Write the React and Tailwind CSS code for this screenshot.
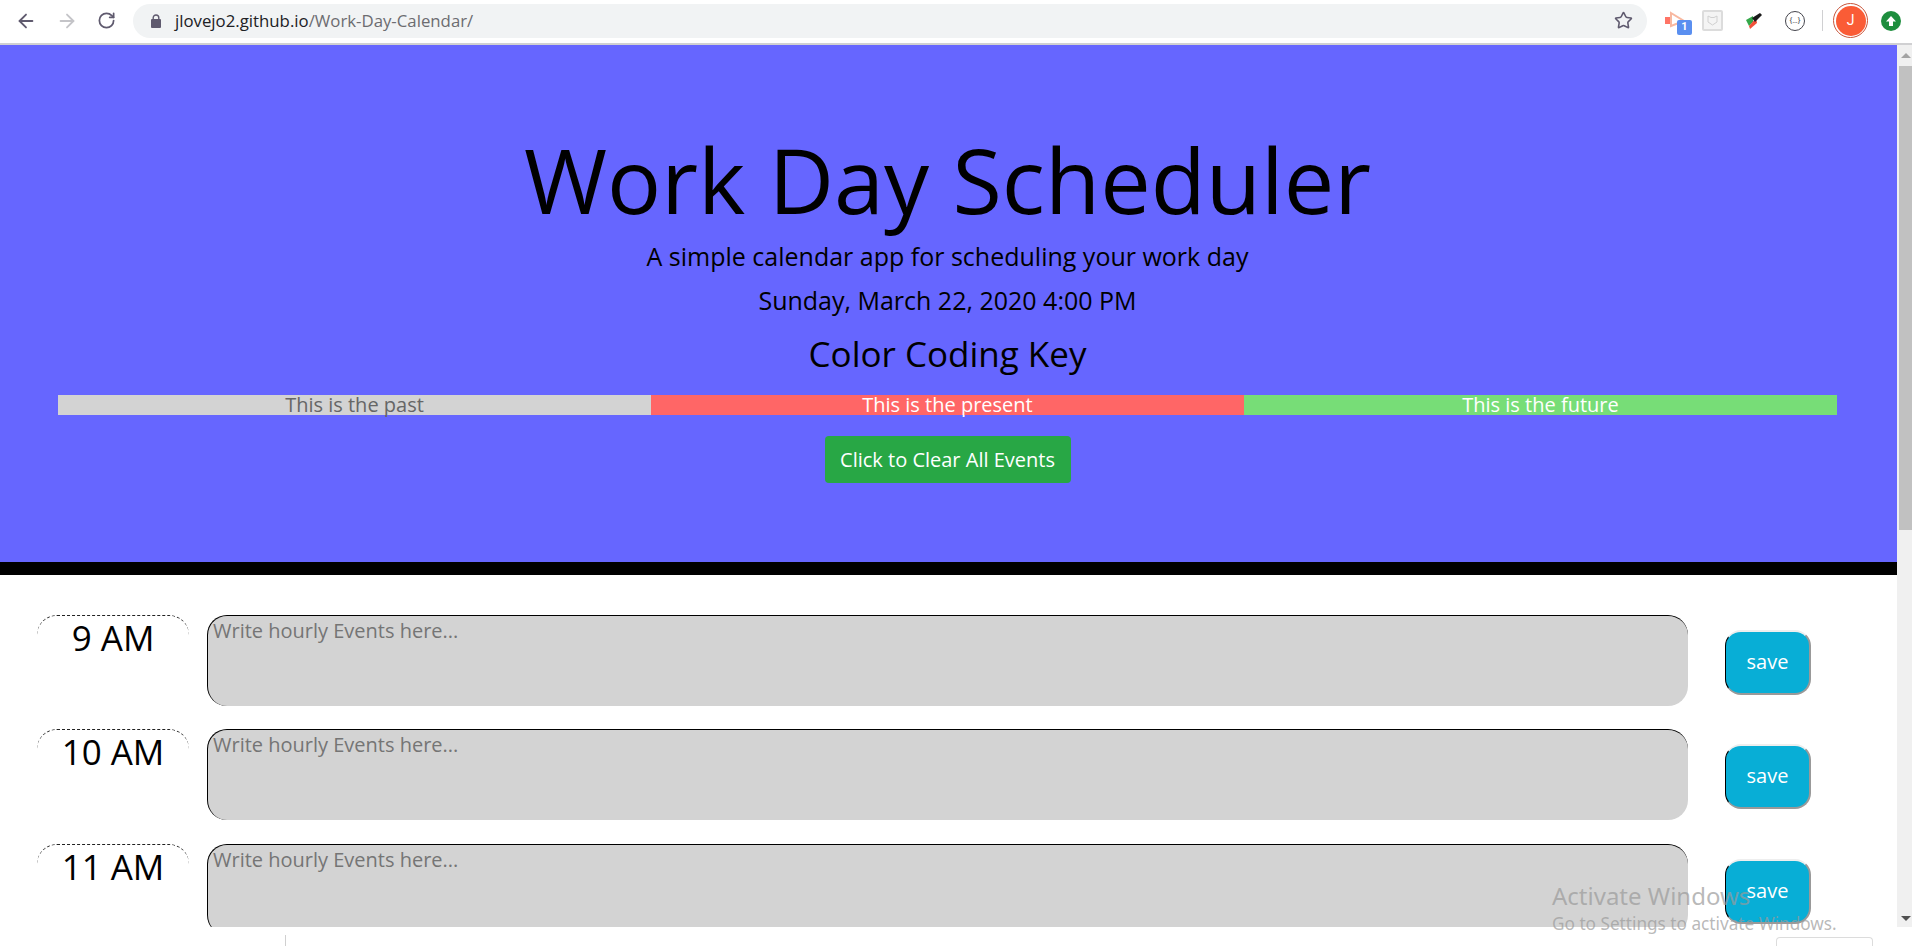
import { ArrowLeft, ArrowRight, RotateCw, Star } from 'lucide-react'

const hours = ['9 AM', '10 AM', '11 AM']

function Chrome() {
  return (
    <div className="flex h-[45px] shrink-0 items-center border-b-2 border-[#d0d0d2] bg-white pb-[2px]">
      <div className="flex w-[133px] items-center pl-[15px] gap-[19px] text-[#5f5a6e]">
        <ArrowLeft size={22} strokeWidth={2} />
        <ArrowRight size={22} strokeWidth={2} className="text-[#c4c4c8]" />
        <RotateCw size={19} strokeWidth={2.2} />
      </div>
      <div className="flex h-[34px] w-[1514px] items-center rounded-full bg-[#f1f3f4] pl-[17px] pr-[14px]">
        <svg width="12" height="14" viewBox="0 0 12 14">
          <rect x="1" y="5" width="10" height="9" rx="1" fill="#5f5a6e" />
          <path d="M3.2 5.5 V3.8 a2.8 2.8 0 0 1 5.6 0 V5.5" fill="none" stroke="#5f5a6e" strokeWidth="1.4" />
        </svg>
        <span className="ml-[13px] text-[16.8px] text-[#202124]">jlovejo2.github.io</span>
        <span className="text-[16.8px] text-[#6c6c70]">/Work-Day-Calendar/</span>
        <Star size={19} strokeWidth={2} className="ml-auto text-[#5f5a6e]" />
      </div>
      <div className="relative ml-[17px] h-[24px] w-[28px]">
        <svg width="22" height="20" viewBox="0 0 22 20" className="mt-[2px]">
          <rect x="1" y="6" width="6" height="7" fill="#ff7466" />
          <path d="M7 2 L20 10 L7 15 Z" fill="#fff" stroke="#f8b8a0" strokeWidth="2" />
        </svg>
        <span className="absolute left-[13px] top-[11px] flex h-[15px] w-[15px] items-center justify-center rounded-[2px] bg-[#5a8ff0] font-['Roboto',sans-serif] text-[11px] font-bold text-white">1</span>
      </div>
      <div className="ml-[10px] flex h-[21px] w-[21px] items-center justify-center rounded-[2px] border-2 border-[#dcdcdc] bg-[#f4f4f4]">
        <svg width="11" height="11" viewBox="0 0 11 11"><path d="M1 1 L4 2.5 H7 L10 1 V7 L5.5 10 L1 7 Z" fill="none" stroke="#d0d0d0" /></svg>
      </div>
      <svg width="20" height="20" viewBox="0 0 20 20" className="ml-[21px]">
        <path d="M2 9 L9 5 L9 11 L5 15 Z" fill="#35a84a" />
        <path d="M5 15 L12 7 L13 12 L6 18 Z" fill="#f0503a" />
        <path d="M8 7 L16 2 L18 4 L11 11 Z" fill="#1a1a1a" />
      </svg>
      <div className="ml-[21px] flex h-[20px] w-[20px] items-center justify-center rounded-full border-[1.5px] border-[#45454d] font-['Roboto',sans-serif] text-[8px] text-[#45454d]">{'{…}'}</div>
      <div className="ml-[17px] h-[21px] w-px bg-[#d0d0d2]" />
      <div className="ml-[10px] flex h-[35px] w-[35px] items-center justify-center rounded-full border border-[#c8553a] bg-white">
        <div className="flex h-[30px] w-[30px] items-center justify-center rounded-full bg-[#fa5c36] font-['Roboto',sans-serif] text-[14px] text-white">J</div>
      </div>
      <div className="ml-[13px] flex h-[20px] w-[20px] items-center justify-center rounded-full bg-[#1e8e3e]">
        <svg width="12" height="12" viewBox="0 0 12 12"><path d="M6 1 L11 6.5 H8 V11 H4 V6.5 H1 Z" fill="#fff" /></svg>
      </div>
    </div>
  )
}

function Header() {
  return (
    <div className="flex h-[530px] shrink-0 flex-col border-b-[13px] border-black bg-[#6666ff] pl-[58px] pr-[60px] text-black">
      <h1 className="mt-[77px] text-center text-[90px] font-normal leading-[115px]">Work Day Scheduler</h1>
      <p className="mt-[1px] text-center text-[25px] leading-[36px]">A simple calendar app for scheduling your work day</p>
      <p className="mt-[8px] text-center text-[25px] leading-[36px]">Sunday, March 22, 2020 4:00 PM</p>
      <h2 className="mt-[14px] text-center text-[35px] leading-[43px]">Color Coding Key</h2>
      <div className="mt-[20px] grid grid-cols-3 text-center text-[20px] leading-[20px]">
        <div className="h-[20px] bg-[#d3d3d3] text-[#666]">This is the past</div>
        <div className="h-[20px] bg-[#ff6666] text-white">This is the present</div>
        <div className="h-[20px] bg-[#77dd77] text-white">This is the future</div>
      </div>
      <button className="mx-auto mt-[21px] h-[47px] w-[246px] rounded-[4px] bg-[#28a745] text-[20px] text-white">Click to Clear All Events</button>
    </div>
  )
}

function Row({ hour }) {
  return (
    <div className="flex h-[91px] shrink-0 items-start">
      <div className="ml-[37px] h-[60px] w-[152px] rounded-t-[20px] border-t border-dashed border-[#222] text-center text-[35px] leading-[44px]">{hour}</div>
      <div className="ml-[18px] h-[91px] w-[1481px] rounded-[20px] border-t border-l border-black bg-[#d3d3d3] pl-[5px] text-[20px] leading-[30px] text-[#757575]">Write hourly Events here...</div>
      <button className="ml-[37px] mt-[15px] h-[65px] w-[86px] rounded-[16px] border-t-2 border-r-2 border-b-2 border-l border-t-[#eeeeee] border-r-[#999] border-b-[#999] border-l-black bg-[#08aed6] pb-[1px] text-[20px] text-white">save</button>
    </div>
  )
}

function Scrollbar() {
  return (
    <div className="flex w-[15px] shrink-0 flex-col bg-[#f0f0f0]">
      <div className="flex h-[21px] items-center justify-center pl-[2px]">
        <div className="h-0 w-0 border-x-[5px] border-b-[5px] border-x-transparent border-b-[#a3a3a3]" />
      </div>
      <div className="ml-[2px] h-[464px] bg-[#c1c1c1]" />
      <div className="flex flex-1 items-end justify-center pb-[6px] pl-[2px]">
        <div className="h-0 w-0 border-x-[5px] border-t-[5px] border-x-transparent border-t-[#505050]" />
      </div>
    </div>
  )
}

export default function App() {
  return (
    <div className="relative flex h-[946px] w-[1912px] flex-col overflow-hidden bg-white font-['Open_Sans',sans-serif]">
      <Chrome />
      <div className="flex h-[882px] shrink-0">
        <div className="flex min-w-0 flex-1 flex-col overflow-hidden">
          <Header />
          <div className="mt-[39.8px] flex flex-col gap-[23.5px]">
            {hours.map((h) => (
              <Row key={h} hour={h} />
            ))}
          </div>
        </div>
        <Scrollbar />
      </div>
      <div className="flex flex-1 items-end">
        <div className="ml-[285px] h-[11px] w-px bg-[#d0d0d0]" />
        <div className="ml-[1490px] h-[9px] w-[97px] rounded-t-[4px] border-x border-t border-[#dcdcdc]" />
      </div>
      <div className="pointer-events-none absolute left-[1552px] top-[880px] text-[#9a9a9a]/70 font-['Noto_Sans',sans-serif]">
        <div className="text-[24px] leading-[32px]">Activate Windows</div>
        <div className="text-[17.2px] leading-[24px]">Go to Settings to activate Windows.</div>
      </div>
    </div>
  )
}
